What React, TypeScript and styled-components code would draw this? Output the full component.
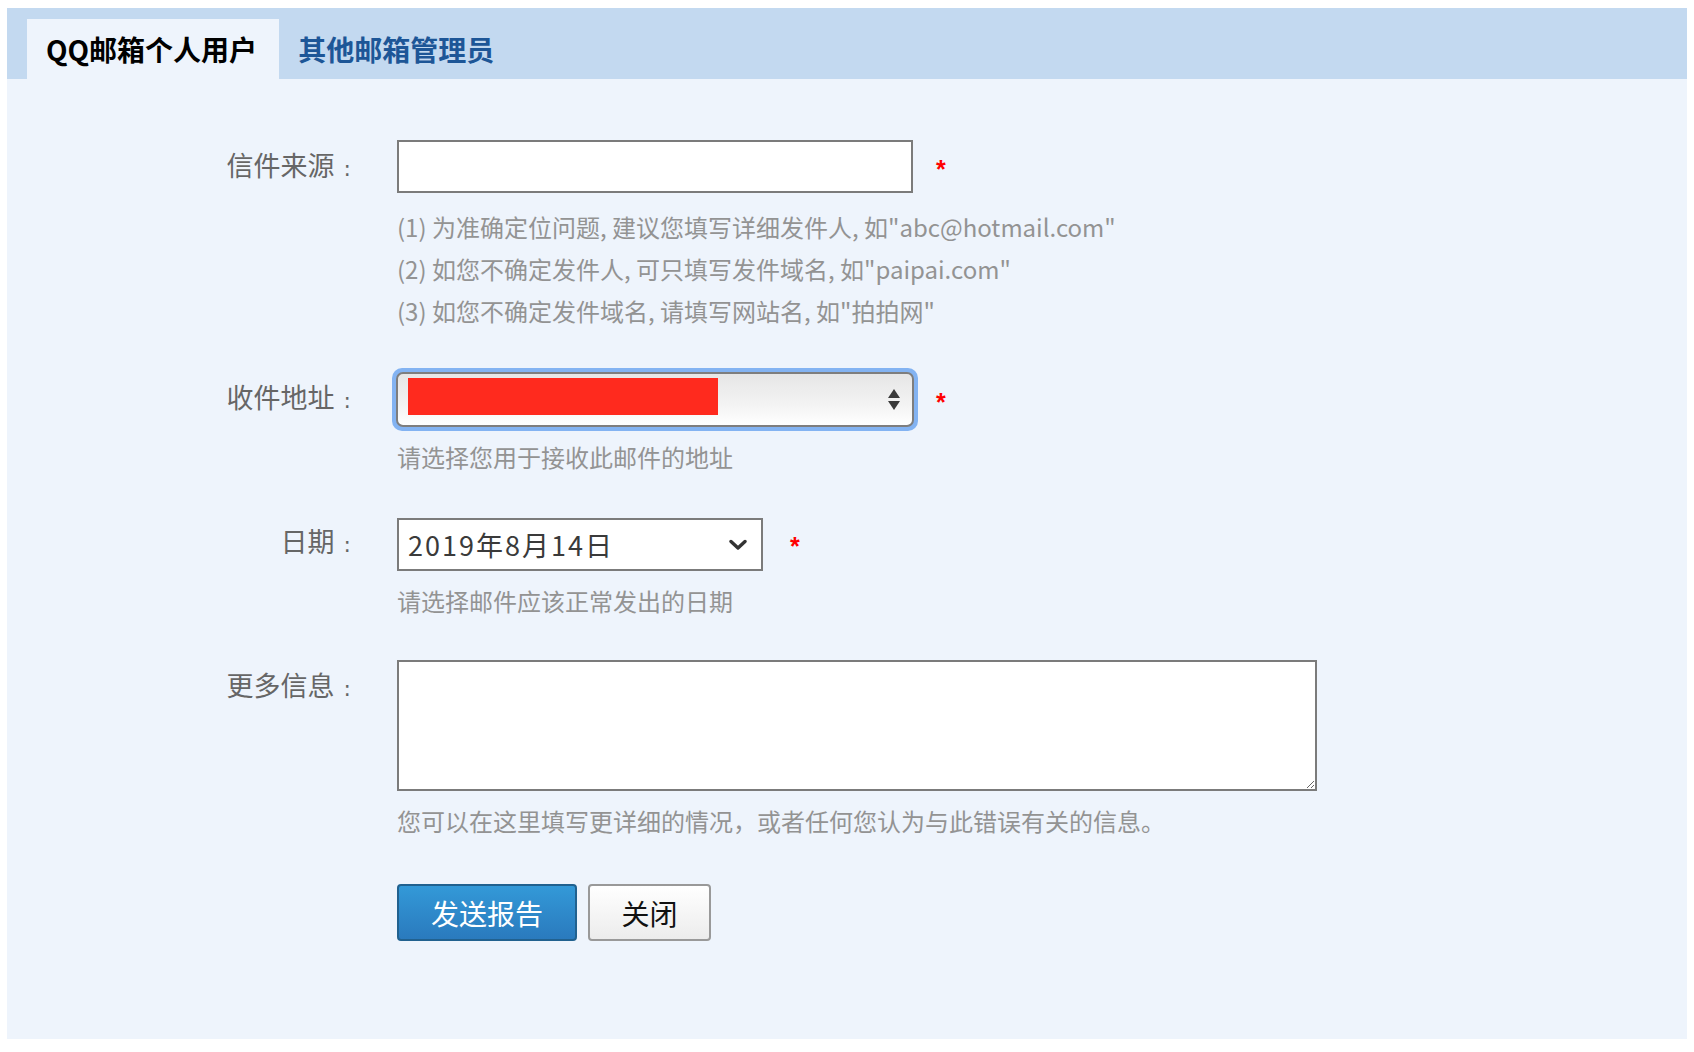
import React, { useState } from "react";
import styled, { createGlobalStyle } from "styled-components";

const GlobalStyle = createGlobalStyle`
  body {
    margin: 8px 7px 13px 7px;
    background: #fff;
    font-family: "Noto Sans CJK SC", "Noto Sans", sans-serif;
  }
`;

const Panel = styled.div`
  background: #eef4fc;
  min-height: 1031px;
  display: flex;
  flex-direction: column;
`;

const TabBar = styled.div`
  display: flex;
  align-items: flex-end;
  height: 71px;
  padding-left: 20px;
  background: #c3d9f0;
`;

const Tab = styled.div<{ $active?: boolean }>`
  display: flex;
  align-items: center;
  height: 60px;
  padding: 0 22px 0 19px;
  font-size: 28px;
  font-weight: 700;
  color: ${(p) => (p.$active ? "#000" : "#1d5697")};
  background: ${(p) => (p.$active ? "#eef4fc" : "transparent")};
  cursor: pointer;
`;

const Form = styled.form`
  display: flex;
  flex-direction: column;
  padding-top: 61px;
`;

const Row = styled.div<{ $gap?: number }>`
  display: grid;
  grid-template-columns: 344px 1fr;
  column-gap: 46px;
  margin-bottom: ${(p) => p.$gap ?? 40}px;
`;

const Label = styled.label<{ $shift?: number }>`
  text-align: right;
  font-size: 27px;
  line-height: 50px;
  margin-top: ${(p) => p.$shift ?? 0}px;
  color: #666;
  white-space: nowrap;
`;

const Colon = styled.span`
  margin-left: 9px;
  font-family: "DejaVu Sans", sans-serif;
  font-size: 22px;
`;

const Field = styled.div<{ $inset?: number }>`
  display: flex;
  flex-direction: column;
  align-items: flex-start;
  margin-left: ${(p) => -(p.$inset ?? 0)}px;
  margin-top: ${(p) => -(p.$inset ?? 0) - (p.$inset ? 1 : 0)}px;
`;

const Line = styled.div`
  display: flex;
  align-items: center;
`;

const TextInput = styled.input`
  box-sizing: border-box;
  width: 516px;
  height: 53px;
  border: 2px solid #7b7b7b;
  background: #fff;
  font-size: 22px;
  padding: 0 10px;
  outline: none;
`;

const Required = styled.span<{ $gap?: number }>`
  margin-left: ${(p) => p.$gap ?? 23}px;
  margin-top: 6px;
  color: #f00;
  font-size: 25px;
  font-family: "Liberation Sans", sans-serif;
  font-weight: 700;
`;

const Hints = styled.div<{ $top?: number; $left?: number }>`
  margin-top: ${(p) => p.$top ?? 13}px;
  margin-left: ${(p) => p.$left ?? 0}px;
  display: flex;
  flex-direction: column;
`;

const Hint = styled.div`
  font-size: 24px;
  line-height: 42px;
  color: #939393;
  white-space: nowrap;
`;

const FocusRing = styled.div`
  padding: 4px;
  border-radius: 10px;
  background: #83b3f2;
`;

const SelectBox = styled.div`
  box-sizing: border-box;
  width: 518px;
  height: 55px;
  border: 2px solid #7e7e7e;
  border-radius: 7px;
  background: linear-gradient(#e6e6e6, #f3f3f3 60%, #fff);
  display: flex;
  align-items: center;
  padding: 0 12px 0 10px;
`;

const Redacted = styled.span`
  display: block;
  width: 310px;
  height: 37px;
  margin-top: -7px;
  background: #ff2a1e;
`;

const Spinner = styled.span`
  margin-left: auto;
  display: flex;
  flex-direction: column;
  gap: 3px;
  color: #3a3a3a;
`;

const DateBox = styled.div`
  box-sizing: border-box;
  width: 366px;
  height: 53px;
  margin-top: 2px;
  border: 2px solid #7b7b7b;
  background: #fff;
  display: flex;
  align-items: center;
  padding: 0 14px 0 9px;
  font-size: 27px;
  color: #3a3a3a;
  letter-spacing: 2px;
`;

const Chevron = styled.span`
  margin-left: auto;
  display: flex;
  color: #333;
`;

const TextArea = styled.textarea`
  box-sizing: border-box;
  width: 920px;
  height: 131px;
  border: 2px solid #7b7b7b;
  background: #fff;
  font-size: 20px;
  outline: none;
  resize: both;
`;

const Buttons = styled.div`
  display: flex;
  gap: 11px;
`;

const Button = styled.button<{ $primary?: boolean }>`
  box-sizing: border-box;
  height: 57px;
  width: ${(p) => (p.$primary ? "180px" : "123px")};
  border-radius: 4px;
  font-size: 28px;
  font-family: "Noto Sans CJK SC", sans-serif;
  cursor: pointer;
  ${(p) =>
    p.$primary
      ? `
    color: #fff;
    border: 2px solid #21618f;
    background: linear-gradient(#3399d8, #2a7abd);
  `
      : `
    color: #111;
    border: 2px solid #999;
    background: linear-gradient(#fff, #ececec);
  `}
`;

const UpDown = () => (
  <Spinner>
    <svg width="12" height="9" viewBox="0 0 12 9">
      <path d="M6 0 L12 9 L0 9 Z" fill="currentColor" />
    </svg>
    <svg width="12" height="9" viewBox="0 0 12 9">
      <path d="M0 0 L12 0 L6 9 Z" fill="currentColor" />
    </svg>
  </Spinner>
);

const ChevronDown = () => (
  <Chevron>
    <svg width="18" height="12" viewBox="0 0 18 12">
      <path
        d="M2 2.5 L9 9 L16 2.5"
        fill="none"
        stroke="currentColor"
        strokeWidth="3.4"
        strokeLinecap="round"
        strokeLinejoin="round"
      />
    </svg>
  </Chevron>
);

const FieldLabel = ({ text, shift }: { text: string; shift?: number }) => (
  <Label $shift={shift}>
    {text}
    <Colon>:</Colon>
  </Label>
);

const App = () => {
  const [tab, setTab] = useState(0);
  const [from, setFrom] = useState("");
  const [more, setMore] = useState("");

  return (
    <Panel>
      <GlobalStyle />
      <TabBar>
        <Tab $active={tab === 0} onClick={() => setTab(0)}>
          QQ邮箱个人用户
        </Tab>
        <Tab $active={tab === 1} onClick={() => setTab(1)}>
          其他邮箱管理员
        </Tab>
      </TabBar>

      <Form onSubmit={(e) => e.preventDefault()}>
        <Row $gap={42}>
          <FieldLabel text="信件来源" />
          <Field>
            <Line>
              <TextInput value={from} onChange={(e) => setFrom(e.target.value)} />
              <Required>*</Required>
            </Line>
            <Hints>
              <Hint>(1) 为准确定位问题, 建议您填写详细发件人, 如"abc@hotmail.com"</Hint>
              <Hint>(2) 如您不确定发件人, 可只填写发件域名, 如"paipai.com"</Hint>
              <Hint>(3) 如您不确定发件域名, 请填写网站名, 如"拍拍网"</Hint>
            </Hints>
          </Field>
        </Row>

        <Row $gap={38}>
          <FieldLabel text="收件地址" shift={-2} />
          <Field $inset={5}>
            <Line>
              <FocusRing>
                <SelectBox>
                  <Redacted />
                  <UpDown />
                </SelectBox>
              </FocusRing>
              <Required $gap={18}>*</Required>
            </Line>
            <Hints $top={5} $left={5}>
              <Hint>请选择您用于接收此邮件的地址</Hint>
            </Hints>
          </Field>
        </Row>

        <Row $gap={38}>
          <FieldLabel text="日期" />
          <Field>
            <Line>
              <DateBox>
                2019年8月14日
                <ChevronDown />
              </DateBox>
              <Required $gap={27}>*</Required>
            </Line>
            <Hints $top={9}>
              <Hint>请选择邮件应该正常发出的日期</Hint>
            </Hints>
          </Field>
        </Row>

        <Row $gap={42}>
          <FieldLabel text="更多信息" />
          <Field>
            <TextArea value={more} onChange={(e) => setMore(e.target.value)} />
            <Hints $top={9}>
              <Hint>您可以在这里填写更详细的情况，或者任何您认为与此错误有关的信息。</Hint>
            </Hints>
          </Field>
        </Row>

        <Row>
          <span />
          <Buttons>
            <Button type="submit" $primary>
              发送报告
            </Button>
            <Button type="button">关闭</Button>
          </Buttons>
        </Row>
      </Form>
    </Panel>
  );
};

export default App;
